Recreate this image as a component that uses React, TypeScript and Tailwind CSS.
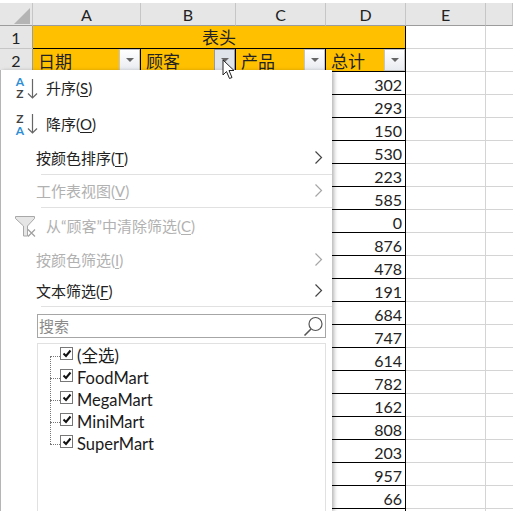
const font = "font-['Lato','Noto_Sans_CJK_SC',sans-serif]";

const totals = [302, 293, 150, 530, 223, 585, 0, 876, 478, 191, 684, 747, 614, 782, 162, 808, 203, 957, 66, ""];
const customers = ["(全选)", "FoodMart", "MegaMart", "MiniMart", "SuperMart"];

function FilterButton({ hot }: { hot?: boolean }) {
  return (
    <div
      className={`flex h-[22px] w-[21px] shrink-0 items-center justify-center border ${
        hot ? "border-[#9a9a9a] bg-[#dfe3ea]" : "border-[#c4c4c4] bg-gradient-to-b from-white to-[#e8ebf0]"
      }`}
    >
      <div className="h-0 w-0 border-x-[4px] border-t-[4px] border-x-transparent border-t-[#666]" />
    </div>
  );
}

function ColHead({ label, width }: { label: string; width: string }) {
  return (
    <div className={`${width} flex h-[23px] shrink-0 items-center justify-center border-r border-b border-r-[#c6c6c6] border-b-[#9c9c9c] bg-[#e6e6e6] pt-px text-[16px] text-[#222]`}>
      {label}
    </div>
  );
}

function RowHead({ label }: { label: string }) {
  return (
    <div className="flex h-[23px] w-[33px] shrink-0 items-center justify-center border-r border-b border-r-[#9c9c9c] border-b-[#c6c6c6] bg-[#e6e6e6] pt-[2px] text-[16px] text-[#222]">
      {label}
    </div>
  );
}

function HeaderCell({ label, width }: { label: string; width: string }) {
  return (
    <div className={`${width} flex h-[23px] shrink-0 justify-between border-r border-b border-black bg-[#ffc000] pl-[5px] text-[17px] leading-[26px] text-[#222]`}>
      <span>{label}</span>
      <FilterButton hot={label === "顾客"} />
    </div>
  );
}

function SortIcon({ top, bottom, arrowTop }: { top: string; bottom: string; arrowTop: string }) {
  return (
    <div className="flex w-[45px] shrink-0 pl-[14px]">
      <div className="flex w-[10px] flex-col items-center text-[12px] leading-[12px] font-bold">
        <span className={top === "A" ? "text-[#2f8fd6]" : "text-[#444]"}>{top}</span>
        <span className={bottom === "A" ? "text-[#2f8fd6]" : "text-[#444]"}>{bottom}</span>
      </div>
      <svg width="11" height="20" viewBox="0 0 11 20" className={arrowTop} fill="none" stroke="#666" strokeWidth="1.2">
        <path d="M5.5 0V19M1 14.5L5.5 19L10 14.5" />
      </svg>
    </div>
  );
}

function Chevron({ disabled }: { disabled?: boolean }) {
  return (
    <svg width="9" height="13" viewBox="0 0 9 13" fill="none" stroke={disabled ? "#a6a6a6" : "#444"} strokeWidth="1.2" className="-mt-[2px]">
      <path d="M1.5 0.5L7.5 6.5L1.5 12.5" />
    </svg>
  );
}

function MenuRow({ label, height, disabled }: { label: React.ReactNode; height: string; disabled?: boolean }) {
  return (
    <div className={`${height} flex items-center pr-[9px] pl-[35px] text-[15px] ${disabled ? "text-[#b1b1b1]" : "text-[#222]"}`}>
      <span className="flex-1">{label}</span>
      <Chevron disabled={disabled} />
    </div>
  );
}

function Hotkey({ k }: { k: string }) {
  return (
    <>
      (<span className="underline underline-offset-2">{k}</span>)
    </>
  );
}

function Separator() {
  return <div className="ml-[40px] h-px bg-[#e1e1e1]" />;
}

function CheckRow({ label }: { label: string }) {
  return (
    <div className="flex h-[22px] items-center">
      <div className="ml-[12px] w-[10px] border-t border-dotted border-[#777]" />
      <div className="mb-[6px] flex h-[13px] w-[13px] items-center justify-center border border-[#777] bg-white">
        <svg width="10" height="9" viewBox="0 0 10 9" fill="none" stroke="#111" strokeWidth="2">
          <path d="M1.5 4.5L4 7l4.5-5.5" />
        </svg>
      </div>
      <span className="ml-[4px] text-[16.5px] leading-[20px] text-[#1a1a1a]">{label}</span>
    </div>
  );
}

export default function App() {
  return (
    <div className={`${font} relative h-[511px] w-[513px] overflow-hidden bg-white`}>
      {/* column headers */}
      <div className="mt-[3px] flex">
        <div className="flex h-[23px] w-[33px] shrink-0 items-end justify-end border-r border-b border-r-[#c6c6c6] border-b-[#9c9c9c] bg-[#e6e6e6] pr-[2px] pb-[1px]">
          <svg width="16" height="16" viewBox="0 0 16 16">
            <path d="M16 0V16H0Z" fill="#b4b4b4" />
          </svg>
        </div>
        <ColHead label="A" width="w-[108px]" />
        <ColHead label="B" width="w-[95px]" />
        <ColHead label="C" width="w-[90px]" />
        <ColHead label="D" width="w-[80px]" />
        <ColHead label="E" width="w-[80px]" />
        <ColHead label="" width="w-[27px]" />
      </div>

      {/* row 1 */}
      <div className="flex">
        <RowHead label="1" />
        <div className="flex h-[23px] w-[373px] shrink-0 items-center justify-center border-r border-b border-black bg-[#ffc000] pt-[2px] text-[17px] text-[#222]">表头</div>
        <div className="h-[23px] w-[80px] shrink-0 border-r border-b border-[#d4d4d4]" />
        <div className="h-[23px] w-[27px] shrink-0 border-b border-[#d4d4d4]" />
      </div>

      {/* row 2 */}
      <div className="flex">
        <RowHead label="2" />
        <HeaderCell label="日期" width="w-[108px]" />
        <HeaderCell label="顾客" width="w-[95px]" />
        <HeaderCell label="产品" width="w-[90px]" />
        <HeaderCell label="总计" width="w-[80px]" />
        <div className="h-[23px] w-[80px] shrink-0 border-r border-b border-[#d4d4d4]" />
        <div className="h-[23px] w-[27px] shrink-0 border-b border-[#d4d4d4]" />
      </div>

      {/* data rows, mostly covered by the menu */}
      {totals.map((total, i) => (
        <div key={i} className="flex">
          <div className="h-[23px] w-[326px] shrink-0 border-b border-black" />
          <div className="flex h-[23px] w-[80px] shrink-0 justify-end border-r border-b border-black pr-[3px] text-[16px] leading-[26px] text-[#222]">
            {total}
          </div>
          <div className="h-[23px] w-[80px] shrink-0 border-r border-b border-[#d4d4d4]" />
          <div className="h-[23px] w-[27px] shrink-0 border-b border-[#d4d4d4]" />
        </div>
      ))}

      {/* filter menu */}
      <div className="absolute top-[70px] left-0 h-[441px] w-[332px] border-l border-[#b5b5b5] bg-white shadow-[2px_1px_4px_rgba(0,0,0,0.3)]">
        <div className="flex h-[36px] items-center text-[15px] text-[#222]">
          <SortIcon top="A" bottom="Z" arrowTop="mt-[3px] ml-[2px]" />
          <span>升序<Hotkey k="S" /></span>
        </div>
        <div className="flex h-[37px] items-center text-[15px] text-[#222]">
          <SortIcon top="Z" bottom="A" arrowTop="mt-[1px] ml-[2px]" />
          <span>降序<Hotkey k="O" /></span>
        </div>
        <MenuRow label={<>按颜色排序<Hotkey k="T" /></>} height="h-[31px]" />
        <Separator />
        <MenuRow label={<>工作表视图<Hotkey k="V" /></>} height="h-[32px]" disabled />
        <Separator />
        <div className="flex h-[37px] items-center text-[15px] text-[#b1b1b1]">
          <div className="w-[45px] shrink-0 pl-[14px]">
            <svg width="21" height="21" viewBox="0 0 21 21" fill="none">
              <path d="M0.5 0.5H19.5V2.5L12.5 10V20H8.5V10L0.5 2.5Z" fill="#e6e6e6" stroke="#a8a8a8" />
              <path d="M13 13.5L20 20.5M20 13.5L13 20.5" stroke="#a0a0a0" strokeWidth="1.2" />
            </svg>
          </div>
          <span>从“顾客”中清除筛选<Hotkey k="C" /></span>
        </div>
        <MenuRow label={<>按颜色筛选<Hotkey k="I" /></>} height="h-[31px]" disabled />
        <MenuRow label={<>文本筛选<Hotkey k="F" /></>} height="h-[30px]" />
        <Separator />

        {/* search box */}
        <div className="mt-[7px] ml-[36px] flex h-[24px] w-[289px] items-center justify-between border border-[#a6a6a6] pr-[1px] pl-[1px] text-[15px] text-[#8a8a8a]">
          <span>搜索</span>
          <svg width="21" height="21" viewBox="0 0 21 21" fill="none" stroke="#555" strokeWidth="1.2">
            <circle cx="12.5" cy="8" r="6.5" />
            <path d="M8 13L1.5 19.5" strokeWidth="1.6" />
          </svg>
        </div>

        {/* customer list */}
        <div className="relative mt-[5px] ml-[36px] h-[180px] w-[289px] border border-[#e1e1e1] pt-[1px]">
          <div className="absolute top-[12px] left-[12px] h-[88px] border-l border-dotted border-[#777]" />
          {customers.map((name) => (
            <CheckRow key={name} label={name} />
          ))}
        </div>
      </div>

      {/* mouse cursor */}
      <svg width="14" height="21" viewBox="0 0 14 21" className="absolute top-[59px] left-[222px]">
        <path d="M1 1V16L4.5 12.5L7.5 19.5L10 18.5L7 11.5H12Z" fill="white" stroke="#222" strokeWidth="1" />
      </svg>
    </div>
  );
}
